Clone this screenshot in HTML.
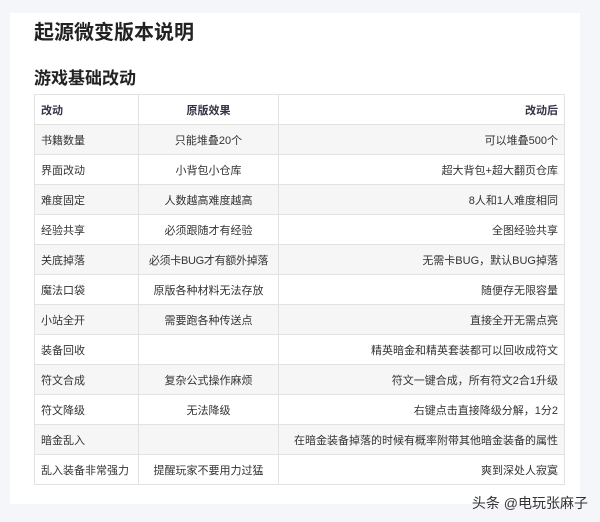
<!DOCTYPE html>
<html><head><meta charset="utf-8"><style>
body{margin:0;width:600px;height:522px;background:#f5f6fa;font-family:"Liberation Sans","Noto Sans CJK SC",sans-serif;position:relative;overflow:hidden}
.card{position:absolute;left:10px;top:13px;width:570px;height:491px;background:#fff}
h1{position:absolute;left:34px;top:16px;margin:0;font-size:20px;color:#222;font-weight:bold}
h2{position:absolute;left:34px;top:64px;margin:0;font-size:17px;color:#222;font-weight:bold}
table{position:absolute;left:34px;top:94px;border-collapse:collapse;table-layout:fixed;width:531px;font-size:11px;color:#333}
td,th{border:1px solid #e2e2e2;height:30px;padding:0 6px;font-weight:normal;white-space:nowrap;overflow:hidden;box-sizing:border-box}
th{font-weight:bold;color:#334}
tr:nth-child(even) td{background:#f6f6f6}
td:nth-child(2),th:nth-child(2){text-align:center}
td:nth-child(3),th:nth-child(3){text-align:right}
td:first-child,th:first-child{text-align:left}
.wm{position:absolute;right:12px;top:493px;font-size:14px;color:#333}
</style></head><body>
<div class="card"></div>
<h1>起源微变版本说明</h1>
<h2>游戏基础改动</h2>
<table>
<colgroup><col style="width:104px"><col style="width:140px"><col></colgroup>
<tr><th>改动</th><th>原版效果</th><th>改动后</th></tr>
<tr><td>书籍数量</td><td>只能堆叠20个</td><td>可以堆叠500个</td></tr>
<tr><td>界面改动</td><td>小背包小仓库</td><td>超大背包+超大翻页仓库</td></tr>
<tr><td>难度固定</td><td>人数越高难度越高</td><td>8人和1人难度相同</td></tr>
<tr><td>经验共享</td><td>必须跟随才有经验</td><td>全图经验共享</td></tr>
<tr><td>关底掉落</td><td style="letter-spacing:-0.3px">必须卡BUG才有额外掉落</td><td>无需卡BUG，默认BUG掉落</td></tr>
<tr><td>魔法口袋</td><td>原版各种材料无法存放</td><td>随便存无限容量</td></tr>
<tr><td>小站全开</td><td>需要跑各种传送点</td><td>直接全开无需点亮</td></tr>
<tr><td>装备回收</td><td></td><td>精英暗金和精英套装都可以回收成符文</td></tr>
<tr><td>符文合成</td><td>复杂公式操作麻烦</td><td>符文一键合成，所有符文2合1升级</td></tr>
<tr><td>符文降级</td><td>无法降级</td><td>右键点击直接降级分解，1分2</td></tr>
<tr><td>暗金乱入</td><td></td><td>在暗金装备掉落的时候有概率附带其他暗金装备的属性</td></tr>
<tr><td>乱入装备非常强力</td><td>提醒玩家不要用力过猛</td><td>爽到深处人寂寞</td></tr>
</table>
<div class="wm">头条 @电玩张麻子</div>
</body></html>
